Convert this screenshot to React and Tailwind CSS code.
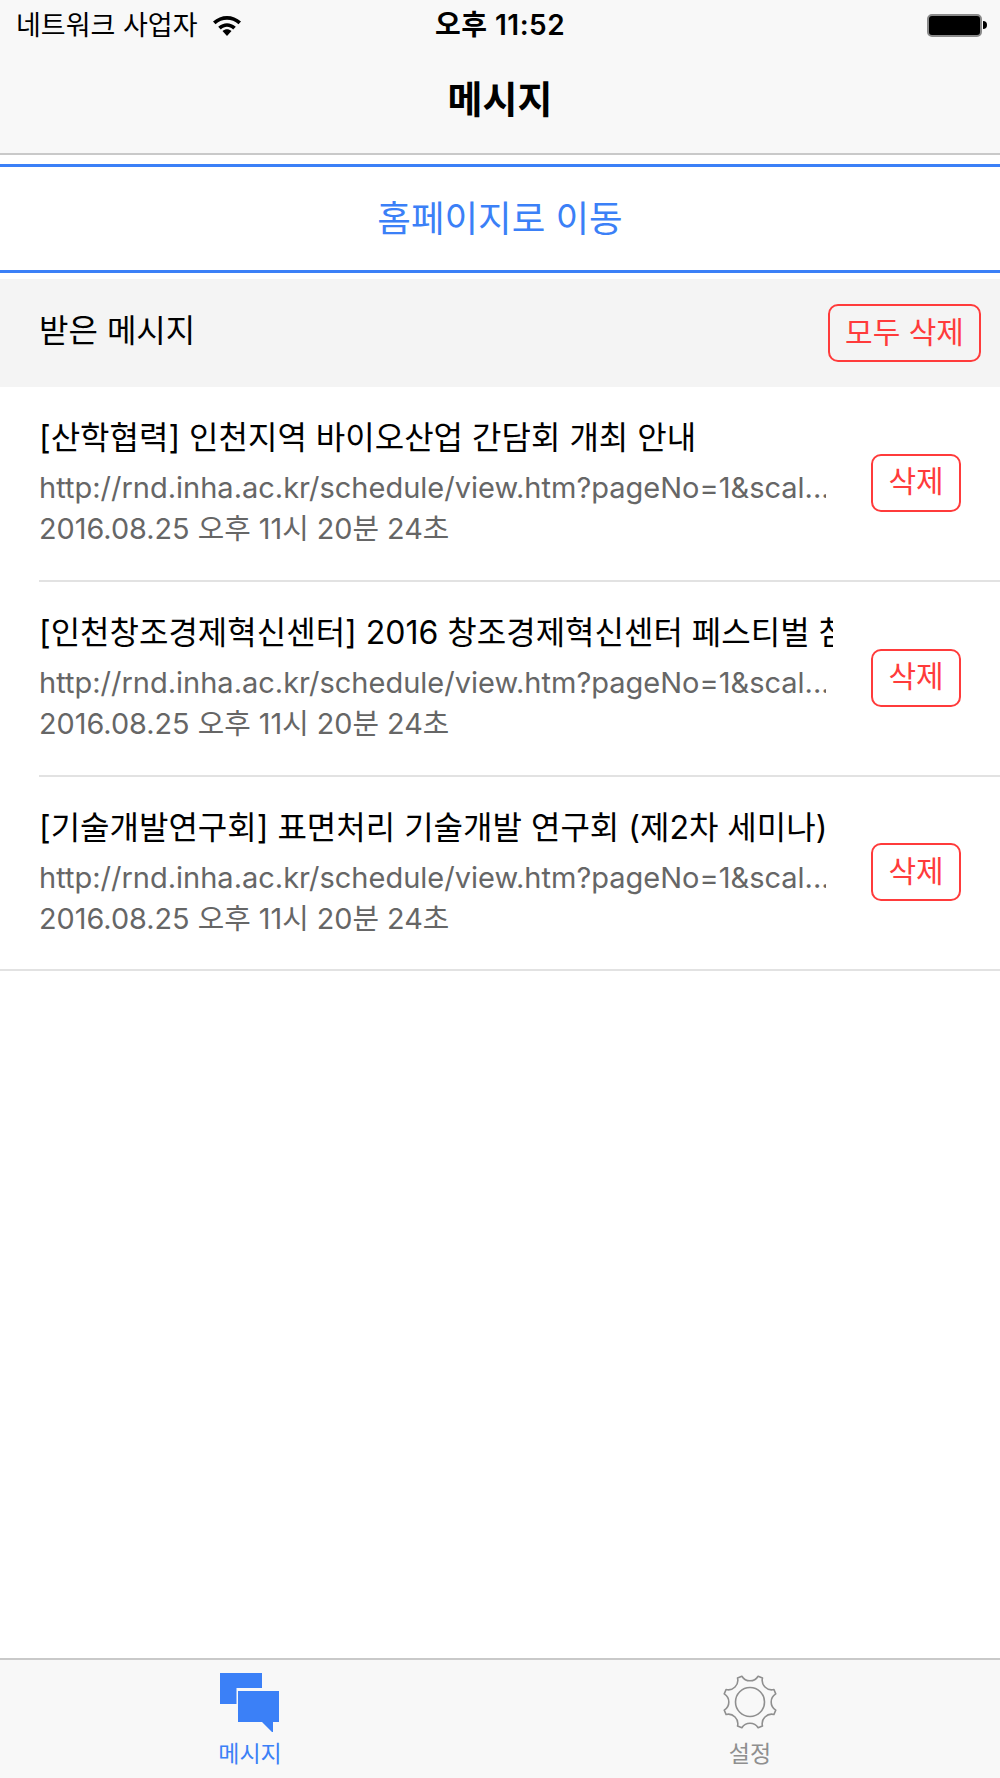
import React from 'react'

const font = { fontFamily: 'Inter, "Noto Sans CJK KR", sans-serif' }

const messages = [
    { title: '[산학협력] 인천지역 바이오산업 간담회 개최 안내' },
    { title: '[인천창조경제혁신센터] 2016 창조경제혁신센터 페스티벌 참가 안내' },
    { title: '[기술개발연구회] 표면처리 기술개발 연구회 (제2차 세미나)' },
]

// eight pointed teeth with a concave arc between each pair
function gearPath() {
    const point = (deg) => {
        const rad = (deg * Math.PI) / 180
        return `${(27 + 27 * Math.sin(rad)).toFixed(2)} ${(27 - 27 * Math.cos(rad)).toFixed(2)}`
    }
    let d = `M${point(17.5)}`
    for (let i = 0; i < 8; i++) {
        const tip = 22.5 + i * 45
        d += ` L${point(tip + 5)} A9.5 9.5 0 0 0 ${point(tip + 40)}`
    }
    return d + 'Z'
}

function StatusBar() {
    return (
        <div className="h-[50px] flex items-center relative pl-[16px] pr-[13px]">
            <span className="text-[27px] leading-none text-black">네트워크 사업자</span>
            <svg className="ml-[15px] w-[30px] h-[24px]" viewBox="0 0 30 24">
                <path d="M1 8.5 C9 1 21 1 29 8.5 L26.5 11.2 C20 5.4 10 5.4 3.5 11.2Z" fill="#000" />
                <path d="M6.2 13.8 C11.6 9 18.4 9 23.8 13.8 L21.2 16.4 C17.4 13 12.6 13 8.8 16.4Z" fill="#000" />
                <path d="M10.5 18 C13.4 15.8 16.6 15.8 19.5 18 L15 23Z" fill="#000" />
            </svg>
            <span className="absolute left-0 right-0 text-center text-[28px] tracking-[0.5px] leading-none font-semibold text-black">오후 11:52</span>
            <div className="ml-auto flex items-center">
                <div className="w-[55px] h-[23px] rounded-[5px] border-2 border-[#8a8a8a] bg-black"></div>
                <div className="w-[4px] h-[8px] rounded-r-full bg-black ml-[1px]"></div>
            </div>
        </div>
    )
}

function MessageRow({ title, last }) {
    return (
        <div className={`flex items-center ${last ? 'h-[192px]' : 'h-[195px] border-b-2 border-[#e2e2e2]'}`}>
            <div className="w-[794px] shrink-0 overflow-hidden pb-[2px]">
                <div className="text-[32px] leading-[44px] text-black whitespace-nowrap overflow-hidden">{title}</div>
                <div className="w-[787px] mt-[8px] text-[29px] leading-[40px] text-[#666666] whitespace-nowrap overflow-hidden">
                    http://rnd.inha.ac.kr/schedule/view.htm?pageNo=1&amp;scal...
                </div>
                <div className="mt-[1px] text-[28.8px] leading-[40px] text-[#666666] whitespace-nowrap">2016.08.25 오후 11시 20분 24초</div>
            </div>
            <button className="ml-[38px] w-[90px] h-[58px] -mt-[2px] rounded-[10px] border-2 border-[#ff3b3b] text-[30px] leading-none text-[#ff3b3b] bg-white pb-[3px]">삭제</button>
        </div>
    )
}

export default function App() {
    return (
        <div className="w-[1000px] h-[1778px] bg-white flex flex-col overflow-hidden" style={font}>
            <div className="h-[155px] bg-[#f8f8f8] border-b-2 border-[#c9c9c9] shrink-0">
                <StatusBar />
                <div className="h-[46px] mt-[26px] flex items-center justify-center text-[38px] leading-none font-bold text-black">메시지</div>
            </div>
            <button className="mt-[9px] h-[109px] shrink-0 border-y-[3px] border-[#3b80f7] bg-white text-[36.5px] leading-none text-[#3b80f7] pt-[2px]">홈페이지로 이동</button>
            <div className="mt-[6px] h-[108px] shrink-0 bg-[#f4f4f4] flex items-center justify-between pl-[39px] pr-[19px]">
                <span className="text-[32px] leading-none text-black pb-[4px]">받은 메시지</span>
                <button className="w-[153px] h-[58px] rounded-[10px] border-2 border-[#ff3b3b] text-[30px] leading-none text-[#ff3b3b] pb-[2px]">모두 삭제</button>
            </div>
            <div className="flex-1">
                {messages.map((m, index) => (
                    <div key={index} className={index === 2 ? 'pl-[39px] border-b-2 border-[#e2e2e2]' : 'pl-[39px]'}>
                        <MessageRow title={m.title} last={index === 2} />
                    </div>
                ))}
            </div>
            <div className="h-[120px] shrink-0 bg-[#f8f8f8] border-t-2 border-[#c9c9c9] flex">
                <div className="w-1/2 flex flex-col items-center text-[#3b80f7]">
                    <svg className="mt-[13px] w-[60px] h-[60px]" viewBox="0 0 60 60">
                        <path d="M0 0 H42 V15 H16.5 V31 H0Z" fill="#3b80f7" />
                        <path d="M18 18 H59 V49 H53 V59 H52 L42 49 H18Z" fill="#3b80f7" />
                    </svg>
                    <span className="text-[23px] leading-none mt-[10px]">메시지</span>
                </div>
                <div className="w-1/2 flex flex-col items-center text-[#8f8f8f]">
                    <svg className="mt-[15px] w-[54px] h-[54px]" viewBox="0 0 54 54" fill="none" stroke="#8f8f8f" strokeWidth="1.6" strokeLinejoin="round">
                        <circle cx="27" cy="27" r="14.5" />
                        <path d={gearPath()} />
                    </svg>
                    <span className="text-[23px] leading-none mt-[14px]">설정</span>
                </div>
            </div>
        </div>
    )
}
